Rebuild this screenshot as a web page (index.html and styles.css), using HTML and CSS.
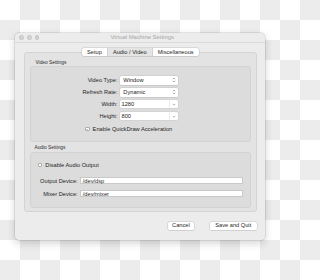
FILE: index.html
```html
<!DOCTYPE html>
<html>
<head>
<meta charset="utf-8">
<link rel="stylesheet" href="styles.css">
</head>
<body>
<div class="window">
  <div class="titlebar">
    <div class="lights"><span class="light"></span><span class="light"></span><span class="light"></span></div>
    <div class="title">Virtual Machine Settings</div>
    <div></div>
  </div>
  <div class="content">
    <div class="tabs">
      <div class="tab">Setup</div>
      <div class="tab sel">Audio / Video</div>
      <div class="tab">Miscellaneous</div>
    </div>
    <div class="tabbox">
      <div class="glabel">Video Settings</div>
      <div class="group video">
        <div class="lbl">Video Type:</div>
        <div class="popup"><span>Window</span><svg class="updown" viewBox="0 0 4 6"><path d="M0.8 2.2 L2 1 L3.2 2.2 M0.8 3.8 L2 5 L3.2 3.8" fill="none" stroke="#777" stroke-width="0.6"/></svg></div>
        <div class="lbl">Refresh Rate:</div>
        <div class="popup"><span>Dynamic</span><svg class="updown" viewBox="0 0 4 6"><path d="M0.8 2.2 L2 1 L3.2 2.2 M0.8 3.8 L2 5 L3.2 3.8" fill="none" stroke="#777" stroke-width="0.6"/></svg></div>
        <div class="lbl">Width:</div>
        <div class="combo"><span class="ctext">1280</span><span class="cbtn"><svg viewBox="0 0 4 3"><path d="M0.8 0.9 L2 2.1 L3.2 0.9" fill="none" stroke="#888" stroke-width="0.6"/></svg></span></div>
        <div class="lbl">Height:</div>
        <div class="combo"><span class="ctext">800</span><span class="cbtn"><svg viewBox="0 0 4 3"><path d="M0.8 0.9 L2 2.1 L3.2 0.9" fill="none" stroke="#888" stroke-width="0.6"/></svg></span></div>
        <div class="check qd"><span class="box"><svg viewBox="0 0 5 5"><path d="M1.1 2.6 L2.1 3.6 L3.9 1.2" fill="none" stroke="#333" stroke-width="0.6"/></svg></span><span>Enable QuickDraw Acceleration</span></div>
      </div>
      <div class="glabel audio-label">Audio Settings</div>
      <div class="group audio">
        <div class="check da"><span class="box"></span><span>Disable Audio Output</span></div>
        <div class="lbl">Output Device:</div>
        <div class="field">/dev/dsp</div>
        <div class="lbl">Mixer Device:</div>
        <div class="field">/dev/mixer</div>
      </div>
    </div>
    <div class="buttons">
      <div class="btn cancel">Cancel</div>
      <div class="btn save">Save and Quit</div>
    </div>
  </div>
</div>
</body>
</html>
```
FILE: styles.css
```css
html, body {
  margin: 0;
}
body {
  width: 280px;
  height: 280px;
  box-sizing: border-box;
  padding: 33px 0 0 15px;
  background-color: #ffffff;
  background-image: conic-gradient(#ececec 0 25%, #ffffff 0 50%, #ececec 0 75%, #ffffff 0);
  background-size: 40px 40px;
  font-family: "Liberation Sans", Arial, sans-serif;
  font-size: 5.7px;
  color: #262626;
  overflow: hidden;
}
.window {
  width: 250px;
  height: 207px;
  box-sizing: border-box;
  background: #ececec;
  border-radius: 4px;
  box-shadow: 0 0 0 0.5px rgba(0, 0, 0, 0.16), 0 3px 9px rgba(0, 0, 0, 0.18);
  display: flex;
  flex-direction: column;
}
.titlebar {
  height: 10px;
  box-sizing: border-box;
  border-bottom: 1px solid #dadada;
  display: grid;
  grid-template-columns: 1fr auto 1fr;
  align-items: center;
  padding-left: 4.4px;
}
.lights {
  display: flex;
  gap: 2.9px;
}
.light {
  width: 4.7px;
  height: 4.7px;
  border-radius: 50%;
  box-sizing: border-box;
  background: #d3d3d3;
  border: 0.4px solid #c6c6c6;
}
.title {
  font-size: 5.9px;
  color: #a6a6a6;
  line-height: 9px;
}
.content {
  flex: 1;
  display: flex;
  flex-direction: column;
  padding: 5px 8.3px 0 9px;
}
.tabs {
  align-self: center;
  display: flex;
  height: 8px;
  margin-bottom: -4px;
  position: relative;
  z-index: 1;
  background: #ffffff;
  border-radius: 2px;
  box-shadow: 0 0 0 0.5px #c4c4c4, 0 0.5px 0.6px rgba(0, 0, 0, 0.15);
  overflow: hidden;
}
.tab {
  padding: 0 5px;
  line-height: 8px;
}
.tab.sel {
  background: #e4e4e4;
  border-left: 0.5px solid #d0d0d0;
  border-right: 0.5px solid #d0d0d0;
}
.tabbox {
  background: #e3e3e3;
  border: 0.5px solid #d3d3d3;
  border-radius: 3px;
  padding: 6.5px 4.5px 3.5px;
  display: flex;
  flex-direction: column;
}
.glabel {
  font-size: 4.8px;
  line-height: 6px;
  height: 6px;
  margin-left: 6px;
  color: #2a2a2a;
}
.audio-label {
  margin-top: 3px;
  margin-bottom: 1px;
  margin-left: 5px;
}
.group {
  background: #dcdcdc;
  border: 0.5px solid #d2d2d2;
  border-radius: 3px;
  box-sizing: border-box;
  display: grid;
  align-content: start;
  align-items: center;
}
.video {
  height: 76px;
  padding-top: 9.2px;
  grid-template-columns: 87px 58px;
  grid-auto-rows: 9px;
  column-gap: 2.5px;
  row-gap: 3px;
}
.audio {
  height: 56px;
  padding-top: 8px;
  grid-template-columns: 47.2px 162.7px;
  column-gap: 2.6px;
  row-gap: 5.5px;
}
.lbl {
  text-align: right;
  white-space: nowrap;
}
.popup {
  height: 9px;
  box-sizing: border-box;
  background: #ffffff;
  border-radius: 1.5px;
  box-shadow: 0 0 0 0.5px #c6c6c6, 0 0.5px 0.6px rgba(0, 0, 0, 0.14);
  display: flex;
  align-items: center;
  justify-content: space-between;
  padding: 0 2px 0 3.3px;
}
.updown {
  width: 4px;
  height: 6px;
}
.combo {
  height: 8.5px;
  box-sizing: border-box;
  display: flex;
  align-items: stretch;
  background: #ffffff;
  border-radius: 1.5px;
  box-shadow: 0 0 0 0.5px #c9c9c9;
}
.ctext {
  flex: 1;
  padding-left: 1.5px;
  line-height: 8.5px;
}
.cbtn {
  width: 8px;
  border-left: 0.5px solid #ececec;
  display: flex;
  align-items: center;
  justify-content: center;
}
.cbtn svg {
  width: 4px;
  height: 3px;
}
.check {
  grid-column: 1 / -1;
  display: flex;
  align-items: center;
  gap: 3px;
  height: 9px;
}
.qd {
  margin-left: 54.5px;
  margin-top: 2px;
}
.da {
  margin-left: 7.2px;
  margin-bottom: 1.8px;
}
.box {
  width: 4.6px;
  height: 4.6px;
  box-sizing: border-box;
  background: #ffffff;
  border: 0.5px solid #adadad;
  border-radius: 1px;
  display: flex;
}
.box svg {
  width: 100%;
  height: 100%;
}
.field {
  height: 7.5px;
  box-sizing: border-box;
  background: #ffffff;
  border: 0.5px solid #c9c9c9;
  padding-left: 1.5px;
  line-height: 6.5px;
}
.buttons {
  display: flex;
  justify-content: flex-end;
  gap: 15.5px;
  margin-top: 10px;
}
.btn {
  height: 7.5px;
  line-height: 7.5px;
  background: #ffffff;
  border-radius: 1.5px;
  box-shadow: 0 0 0 0.5px #c4c4c4, 0 0.5px 0.6px rgba(0, 0, 0, 0.15);
  text-align: center;
}
.cancel {
  width: 26.5px;
}
.save {
  width: 47px;
}
```
